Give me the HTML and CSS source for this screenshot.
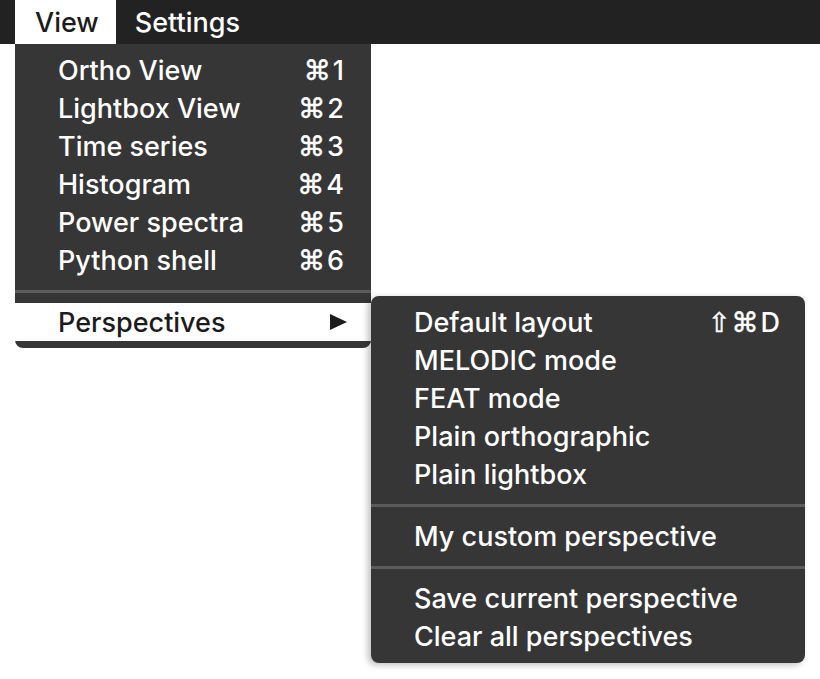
FILE: index.html
```html
<!DOCTYPE html>
<html>
<head>
<meta charset="utf-8">
<link rel="stylesheet" href="styles.css">
</head>
<body>
<div class="menubar">
  <div class="bar-item active">View</div>
  <div class="bar-item">Settings</div>
</div>
<div class="stage">
  <div class="menu main-menu">
    <div class="item"><span class="label">Ortho View</span><span class="key"><span class="sym">⌘</span>1</span></div>
    <div class="item"><span class="label">Lightbox View</span><span class="key"><span class="sym">⌘</span>2</span></div>
    <div class="item"><span class="label">Time series</span><span class="key"><span class="sym">⌘</span>3</span></div>
    <div class="item"><span class="label">Histogram</span><span class="key"><span class="sym">⌘</span>4</span></div>
    <div class="item"><span class="label">Power spectra</span><span class="key"><span class="sym">⌘</span>5</span></div>
    <div class="item"><span class="label">Python shell</span><span class="key"><span class="sym">⌘</span>6</span></div>
    <div class="sep"></div>
    <div class="item selected"><span class="label">Perspectives</span><span class="arrow"></span></div>
  </div>
  <div class="menu sub-menu">
    <div class="item"><span class="label">Default layout</span><span class="key"><span class="sym shift">⇧</span><span class="sym">⌘</span>D</span></div>
    <div class="item"><span class="label">MELODIC mode</span></div>
    <div class="item"><span class="label">FEAT mode</span></div>
    <div class="item"><span class="label">Plain orthographic</span></div>
    <div class="item"><span class="label">Plain lightbox</span></div>
    <div class="sep"></div>
    <div class="item"><span class="label">My custom perspective</span></div>
    <div class="sep"></div>
    <div class="item"><span class="label">Save current perspective</span></div>
    <div class="item"><span class="label">Clear all perspectives</span></div>
  </div>
</div>
</body>
</html>
```
FILE: styles.css
```css
html, body {
  margin: 0;
  padding: 0;
  background: #ffffff;
}
body {
  font-family: Inter, "Liberation Sans", "DejaVu Sans", sans-serif;
  font-size: 27px;
  font-weight: 500;
  color: #ffffff;
  min-height: 679px;
}
.menubar {
  display: flex;
  height: 44px;
  background: #222222;
  padding-left: 15px;
}
.bar-item {
  display: flex;
  align-items: center;
  padding: 0 17px 0 19px;
  color: #ffffff;
}
.bar-item.active {
  background: #ffffff;
  color: #1c1c1c;
  padding-left: 20px;
}
.stage {
  display: flex;
  align-items: flex-start;
  padding-left: 15px;
}
.menu {
  background: #363636;
  padding: 7px 0;
  flex: none;
}
.main-menu {
  width: 356px;
  border-radius: 0 0 8px 8px;
}
.sub-menu {
  margin-top: 252px;
  width: 434px;
  border-radius: 8px;
  box-shadow: -3px 2px 6px rgba(0,0,0,0.25);
  padding-bottom: 8px;
}
.item {
  height: 38px;
  display: flex;
  align-items: center;
  justify-content: space-between;
  padding: 0 27px 0 43px;
  white-space: nowrap;
}
.sub-menu .item {
  padding-right: 25px;
}
.item.selected {
  background: #ffffff;
  color: #1c1c1c;
}
.key {
  display: flex;
  align-items: center;
}
.sym {
  font-family: "DejaVu Sans", sans-serif;
  font-weight: 400;
  font-size: 27px;
  margin-right: 2px;
  -webkit-text-stroke: 0.5px currentColor;
}
.sym.shift {
  margin-right: 1px;
}
.arrow {
  width: 0;
  height: 0;
  border-left: 17px solid #1c1c1c;
  border-top: 8px solid transparent;
  border-bottom: 8px solid transparent;
  margin-right: -3px;
}
.sep {
  height: 3px;
  background: #5c5c5c;
  margin: 11px 0 10px;
}
```
